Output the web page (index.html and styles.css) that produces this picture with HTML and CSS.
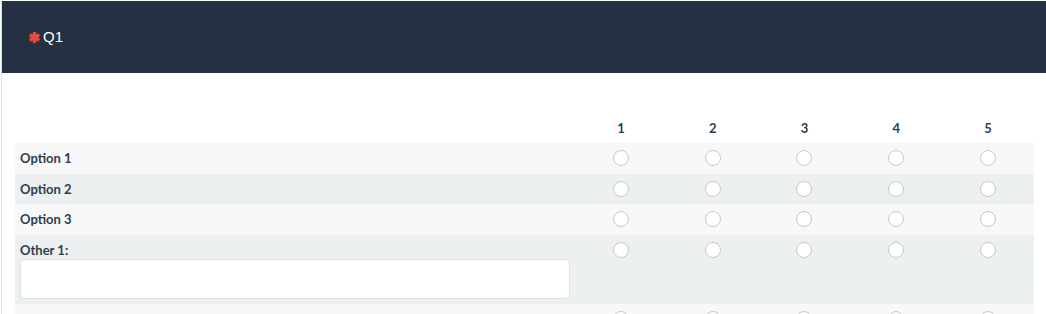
FILE: index.html
```html
<!DOCTYPE html>
<html>
<head>
<meta charset="utf-8">
<link rel="stylesheet" href="styles.css">
</head>
<body>
<div class="panel">
  <div class="q-header">
    <svg class="req" viewBox="0 0 10 10" width="11" height="11" aria-hidden="true">
      <g stroke="#e74c3c" stroke-width="3" stroke-linecap="butt">
        <line x1="5" y1="0" x2="5" y2="10"/>
        <line x1="0.7" y1="2.5" x2="9.3" y2="7.5"/>
        <line x1="0.7" y1="7.5" x2="9.3" y2="2.5"/>
      </g>
    </svg>
    <span class="q-title">Q1</span>
  </div>
  <div class="q-body">
    <table class="matrix">
      <colgroup>
        <col class="c-label">
        <col><col><col><col><col>
      </colgroup>
      <thead>
        <tr>
          <th></th><th>1</th><th>2</th><th>3</th><th>4</th><th>5</th>
        </tr>
      </thead>
      <tbody>
        <tr class="odd">
          <td class="lbl">Option 1</td>
          <td><span class="radio"></span></td><td><span class="radio"></span></td><td><span class="radio"></span></td><td><span class="radio"></span></td><td><span class="radio"></span></td>
        </tr>
        <tr class="even">
          <td class="lbl">Option 2</td>
          <td><span class="radio"></span></td><td><span class="radio"></span></td><td><span class="radio"></span></td><td><span class="radio"></span></td><td><span class="radio"></span></td>
        </tr>
        <tr class="odd">
          <td class="lbl">Option 3</td>
          <td><span class="radio"></span></td><td><span class="radio"></span></td><td><span class="radio"></span></td><td><span class="radio"></span></td><td><span class="radio"></span></td>
        </tr>
        <tr class="even">
          <td class="lbl">Other 1:<div class="other-input"></div></td>
          <td><span class="radio"></span></td><td><span class="radio"></span></td><td><span class="radio"></span></td><td><span class="radio"></span></td><td><span class="radio"></span></td>
        </tr>
        <tr class="odd">
          <td class="lbl"></td>
          <td><span class="radio"></span></td><td><span class="radio"></span></td><td><span class="radio"></span></td><td><span class="radio"></span></td><td><span class="radio"></span></td>
        </tr>
      </tbody>
    </table>
  </div>
</div>
</body>
</html>
```

FILE: styles.css
```css
html, body {
  margin: 0;
  padding: 0;
  background: #ffffff;
}

.panel {
  border-left: 1px solid #dcdcdc;
  margin-left: 1px;
  font-family: "Lato", "Liberation Sans", sans-serif;
  color: #2c3e50;
}

.q-header {
  background: #253142;
  height: 72px;
  margin-top: 1px;
  display: flex;
  align-items: center;
  padding-left: 27px;
  gap: 3px;
}

.req {
  display: block;
  margin-top: 1px;
}

.q-title {
  font-family: "Liberation Sans", Arial, sans-serif;
  font-size: 15px;
  color: #ffffff;
  line-height: 18px;
}

.q-body {
  padding: 40px 12px 0 13px;
}

.matrix {
  width: 1019px;
  border-collapse: collapse;
  table-layout: fixed;
  font-size: 13px;
}

.c-label {
  width: 560px;
}

.matrix th {
  font-weight: 700;
  text-align: center;
  padding: 7px 0 6px 0;
  line-height: 17px;
  height: 17px;
}

.matrix td {
  padding: 7px 5px 5px 5px;
  vertical-align: top;
  text-align: center;
  line-height: 16px;
}

.matrix tbody tr {
  height: 30.5px;
}

.matrix td.lbl {
  text-align: left;
  font-weight: 700;
}

tr.odd td {
  background: #f8f8f8;
}

tr.even td {
  background: #ecf0f1;
}

.radio {
  display: inline-block;
  box-sizing: border-box;
  width: 16px;
  height: 16px;
  border: 1px solid #c9c9c9;
  border-radius: 50%;
  background: #ffffff;
  vertical-align: top;
}

.other-input {
  box-sizing: border-box;
  height: 40px;
  margin-top: 1.5px;
  border: 1px solid #dde2e6;
  border-radius: 4px;
  background: #ffffff;
}
```
